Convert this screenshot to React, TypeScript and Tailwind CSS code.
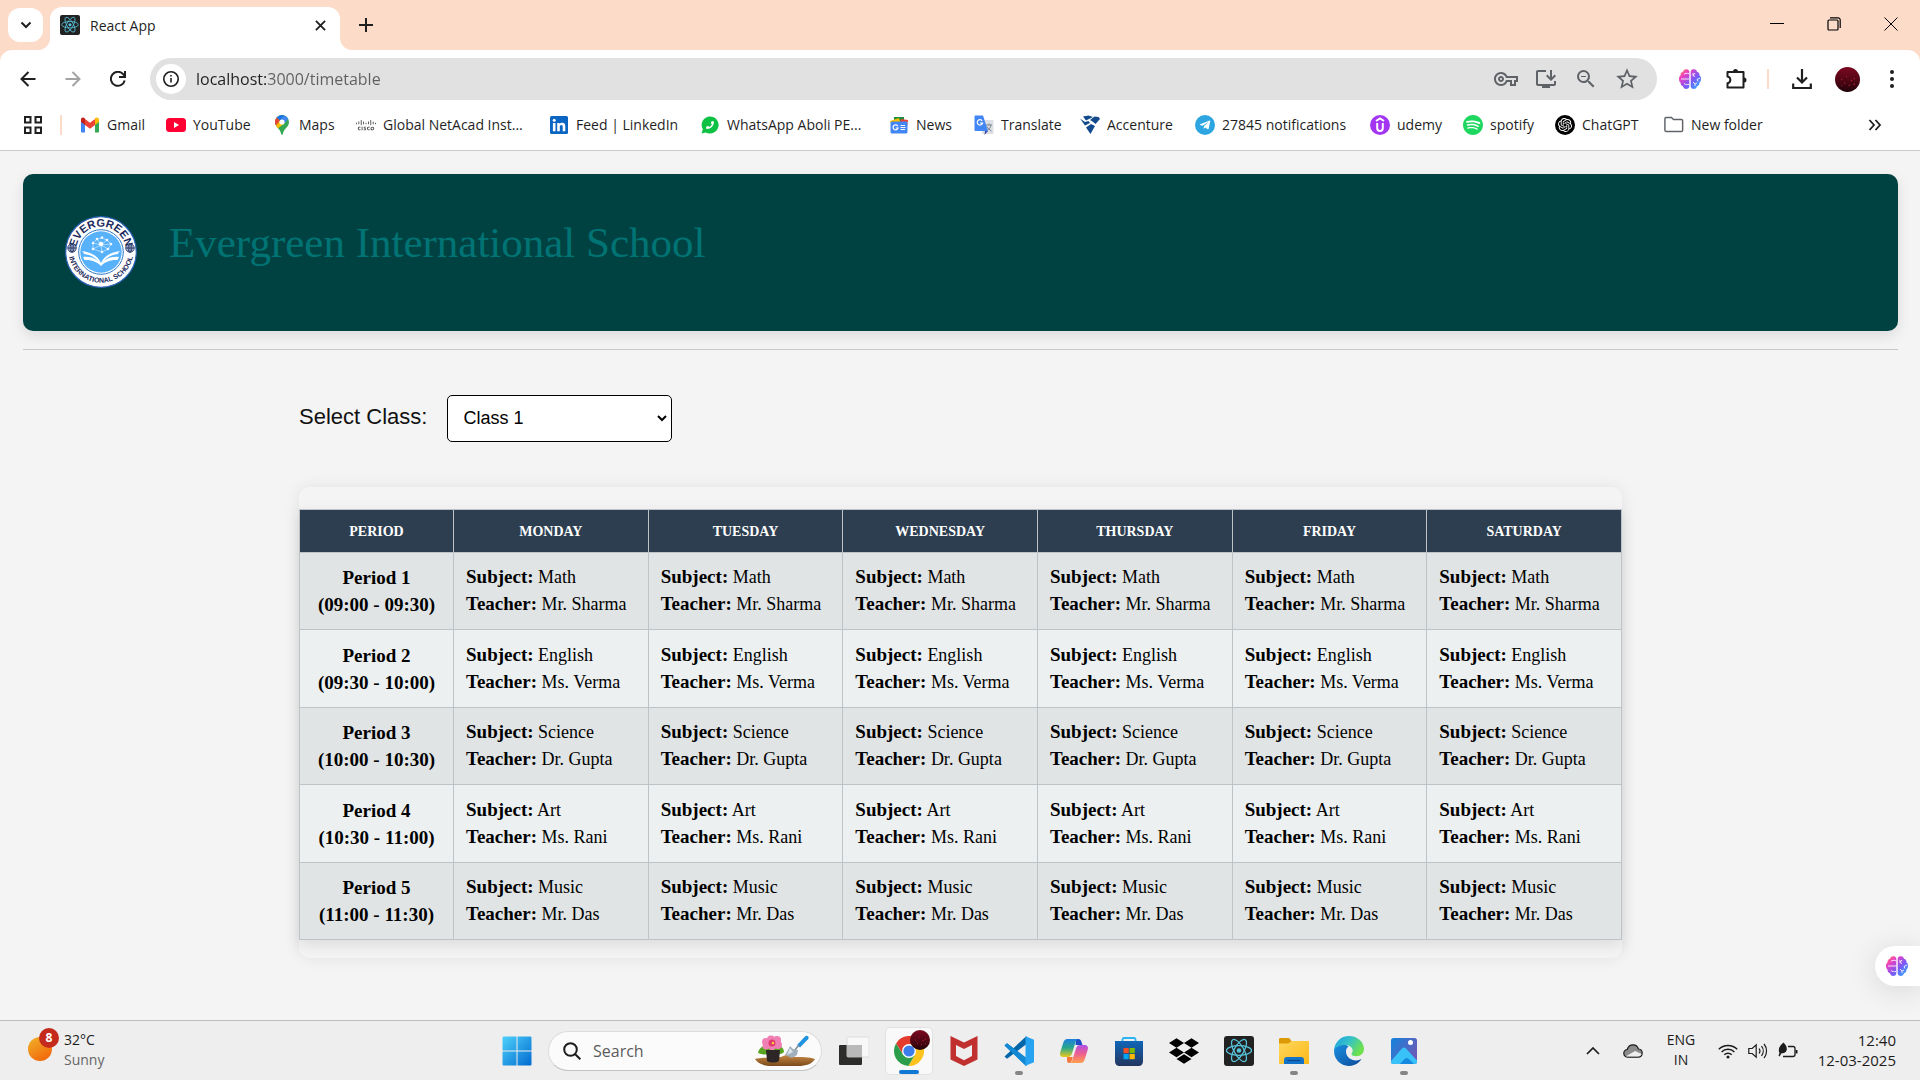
import React from "react";
import { MdInstallDesktop, MdOutlineVpnKey, MdStarOutline, MdZoomOut } from "react-icons/md";
import { SiCisco, SiDropbox, SiOpenai, SiSpotify } from "react-icons/si";
import { FaPhoneAlt, FaTelegramPlane } from "react-icons/fa";

const days = ["Monday", "Tuesday", "Wednesday", "Thursday", "Friday", "Saturday"];

const periods = [
  { name: "Period 1", time: "(09:00 - 09:30)", subject: "Math", teacher: "Mr. Sharma" },
  { name: "Period 2", time: "(09:30 - 10:00)", subject: "English", teacher: "Ms. Verma" },
  { name: "Period 3", time: "(10:00 - 10:30)", subject: "Science", teacher: "Dr. Gupta" },
  { name: "Period 4", time: "(10:30 - 11:00)", subject: "Art", teacher: "Ms. Rani" },
  { name: "Period 5", time: "(11:00 - 11:30)", subject: "Music", teacher: "Mr. Das" },
];

/* ---------- Icons ---------- */

function ReactTile({ size }: { size: string }) {
  return (
    <svg viewBox="0 0 30 30" className={size} aria-hidden="true">
      <rect width="30" height="30" rx="3" fill="#222" />
      <g fill="none" stroke="#58c4dc" strokeWidth="1.2">
        <ellipse cx="15" cy="14.5" rx="12.5" ry="4.8" />
        <ellipse cx="15" cy="14.5" rx="12.5" ry="4.8" transform="rotate(60 15 14.5)" />
        <ellipse cx="15" cy="14.5" rx="12.5" ry="4.8" transform="rotate(120 15 14.5)" />
      </g>
      <circle cx="15" cy="14.5" r="2.3" fill="#58c4dc" />
    </svg>
  );
}

function Brain({ id }: { id: string }) {
  return (
    <svg viewBox="0 0 22 20" className="h-5 w-[22px]" aria-hidden="true">
      <defs>
        <linearGradient id={id} x1="0" y1="0" x2="1" y2="1">
          <stop offset="0" stopColor="#ff9a3c" />
          <stop offset="0.25" stopColor="#ee3fc0" />
          <stop offset="0.6" stopColor="#7a5af8" />
          <stop offset="1" stopColor="#22b8ff" />
        </linearGradient>
      </defs>
      <path
        fill={`url(#${id})`}
        d="M10.3 2.2C9.8.6 8.300 0 7 .2 5.200.3 4.200 1.500 4 2.800 2.300 3.200 1.300 4.600 1.600 6.200.3 7.200 0 8.600 0 10s.4 2.900 1.600 3.800c-.2 1.700.8 3 2.400 3.400.3 1.600 1.500 2.800 3.200 2.800 1.500 0 2.700-.7 3.100-2.200zM11.700 2.200C12.200.6 13.700 0 15 .2c1.800.1 2.800 1.300 3 2.600 1.700.4 2.700 1.800 2.400 3.400C21.700 7.200 22 8.600 22 10s-.4 2.900-1.600 3.800c.2 1.700-.8 3-2.400 3.400-.3 1.600-1.500 2.800-3.200 2.800-1.500 0-2.700-.7-3.100-2.200z"
      />
      <g fill="none" stroke="#fff" strokeWidth="1" opacity=".85">
        <path d="M2 10h8.300M5 5.500c1-1.500 3-1.200 5-1M5 14.500c1.500 1.500 3 1 5 1M14 4v2.500l2 1M16 4l-2 2.500M21 9l-3 1.500 1 2M14 13l2 2v2M18 14l-2 1" />
      </g>
    </svg>
  );
}

function ChromeLogo() {
  return (
    <svg viewBox="0 0 30 30" className="h-[30px] w-[30px]" aria-hidden="true">
      <circle cx="15" cy="15" r="15" fill="#fff" />
      <path d="M15 8h13.300A15 15 0 0 0 2 7.500L9 18.500z" fill="#e33b2e" />
      <path d="M21.060 18.500 14.400 30A15 15 0 0 0 28.300 8H15z" fill="#fcc31e" />
      <path d="M8.940 18.500 2.010 7.500A15 15 0 0 0 14.400 30L21.060 18.500z" fill="#2c9e4b" />
      <circle cx="15" cy="15" r="7" fill="#fff" />
      <circle cx="15" cy="15" r="5.600" fill="#3b7ded" />
    </svg>
  );
}

function RubyAvatar({ size, id }: { size: string; id: string }) {
  return (
    <svg viewBox="0 0 26 26" className={size} aria-hidden="true">
      <defs>
        <linearGradient id={id} x1="0" y1="0" x2="0" y2="1">
          <stop offset="0" stopColor="#7d0820" />
          <stop offset="0.6" stopColor="#4a0613" />
          <stop offset="1" stopColor="#1e0308" />
        </linearGradient>
      </defs>
      <circle cx="13" cy="13" r="13" fill={`url(#${id})`} />
      <g fill="#a8182f">
        <circle cx="7" cy="13" r=".8" />
        <circle cx="12" cy="10" r=".7" />
        <circle cx="17" cy="14" r=".9" />
        <circle cx="10" cy="17" r=".8" />
        <circle cx="20" cy="12" r=".9" />
        <circle cx="15" cy="19" r=".8" />
        <circle cx="20" cy="18" r=".9" />
        <circle cx="7" cy="19" r=".6" />
      </g>
    </svg>
  );
}

const GmailIcon = (
  <svg viewBox="0 0 20 16" className="h-4 w-5">
    <path d="M1 3v11.500c0 .6.400 1 1 1h3V7z" fill="#4285f4" />
    <path d="M19 3v11.500c0 .6-.4 1-1 1h-3V7z" fill="#34a853" />
    <path d="M15 2v6l4-3V2.500C19 .5 16.800-.2 15 1.100z" fill="#fbbc04" />
    <path d="M5 8V2l5 3.800L15 2v6l-5 3.800z" fill="#ea4335" />
    <path d="M1 2.500V5l4 3V1.500C3.200-.2 1 .5 1 2.500z" fill="#c5221f" />
  </svg>
);

const YoutubeIcon = (
  <svg viewBox="0 0 20 14" className="h-3.5 w-5">
    <rect width="20" height="14" rx="3.500" fill="#ff0033" />
    <path d="M8 4v6l5-3z" fill="#fff" />
  </svg>
);

const MapsIcon = (
  <svg viewBox="0 0 16 20" className="h-5 w-4">
    <path d="M8 0a7 7 0 0 0-7 7c0 5 5 6 6.200 12 .2 1.300 1.400 1.300 1.600 0C10 13 15 12 15 7a7 7 0 0 0-7-7z" fill="#34a853" />
    <path d="M8 0a7 7 0 0 0-5.400 2.500L5.900 5.300 10.200.4A7 7 0 0 0 8 0z" fill="#1a73e8" />
    <path d="M2.600 2.500A7 7 0 0 0 1 7c0 1.500.4 2.600 1 3.600l4-4.900z" fill="#ea4335" />
    <path d="M10.200.4 5.900 5.300l4.300 3.400 3.900-4.800A7 7 0 0 0 10.200.4z" fill="#4285f4" />
    <path d="M10.200 8.700 3.900 13.300 2 10.600l4-4.900z" fill="#fbbc04" />
    <circle cx="8" cy="7" r="2.600" fill="#fff" />
  </svg>
);

const LinkedinIcon = (
  <svg viewBox="0 0 18 18" className="h-[18px] w-[18px]">
    <rect width="18" height="18" rx="1.500" fill="#0a66c2" />
    <g fill="#fff">
      <circle cx="4.200" cy="4.200" r="1.500" />
      <path d="M2.900 7h2.600v8.300H2.900zM7.200 7h2.400v1.200c.5-.9 1.500-1.400 2.600-1.400 2.500 0 3.100 1.600 3.100 3.900v4.600h-2.600v-4.100c0-1.200-.1-2.200-1.300-2.200-1.300 0-1.600 1-1.600 2.200v4.100H7.200z" />
    </g>
  </svg>
);

const NewsIcon = (
  <svg viewBox="0 0 20 18" className="h-[18px] w-5">
    <path d="M5 1h10v6H5z" fill="#1e8e3e" />
    <path d="m1 5 9-3 2 7-9 2z" fill="#fbbc04" />
    <path d="m19 4-7-1-2 7 8 1z" fill="#ea4335" />
    <rect x="1.500" y="5.500" width="17" height="12" rx="1.500" fill="#4285f4" />
    <path d="M8.800 10.200A2.500 2.500 0 1 0 9 12H6.800M11.500 9.500h4.500M11.500 11.500h5M11.500 13.500h4.500" fill="none" stroke="#fff" strokeWidth="1.200" />
  </svg>
);

const TranslateIcon = (
  <svg viewBox="0 0 20 20" className="h-5 w-5">
    <rect x="8" y="5" width="11.500" height="14" rx="1" fill="#dcdfe3" />
    <path d="M12 10h6M15 8.500V10M17 10c-.5 2.500-2 4.500-4 5.500M13 11.500c1 2 2.500 3.500 4.500 4.500" fill="none" stroke="#77838f" />
    <path d="M11 16h3l-3.500 4z" fill="#3949ab" />
    <path d="M1.500.5H9L14 16H1.500C.9 16 .5 15.600.5 15V1.500c0-.6.4-1 1-1z" fill="#4285f4" />
    <path d="M8.200 5.800A2.700 2.700 0 1 0 8.600 8H6" fill="none" stroke="#fff" strokeWidth="1.200" />
  </svg>
);

const AccentureIcon = (
  <svg viewBox="0 0 20 20" className="h-5 w-5" fill="#124a8c">
    <path d="M3 1.500 8.500.5 13 2 6 5.500zM14.500 1.500l4 .5L20 4l-4.500 5-3-2.500L10 5zM0 3.500 5 7l3.500-1L10 8l-5 2.500zM11 9l4 2-4.500 8L6 12.500z" />
  </svg>
);

const UdemyIcon = (
  <svg viewBox="0 0 20 20" className="h-5 w-5">
    <circle cx="10" cy="10" r="10" fill="#a435f0" />
    <path d="m6 6 4-2.600L14 6M7.200 8v5c0 1.800 1 3 2.800 3s2.800-1.200 2.800-3V8" fill="none" stroke="#fff" strokeWidth="2" />
  </svg>
);

const FolderIcon = (
  <svg viewBox="0 0 22 18" className="h-[17px] w-[21px]">
    <path d="M2.500 1.200h5.700l2.300 2.300h8.500c.9 0 1.500.6 1.500 1.500v10.300c0 .9-.6 1.500-1.500 1.500H2.500c-.9 0-1.500-.6-1.500-1.500V2.700c0-.9.600-1.500 1.500-1.500z" fill="none" stroke="#5f6368" strokeWidth="1.600" />
  </svg>
);

const WhatsappIcon = (
  <span className="relative flex h-[18px] w-[18px] items-center justify-center">
    <svg viewBox="0 0 18 18" className="absolute h-[18px] w-[18px]" fill="#0cc143">
      <path d="M9 .5a8.500 8.500 0 1 1-4.100 15.900L.6 17.500l1.200-4.200A8.500 8.500 0 0 1 9 .5z" />
    </svg>
    <FaPhoneAlt className="relative h-2 w-2 -scale-x-100 text-white" />
  </span>
);

const bookmarks = [
  { label: "Gmail", width: "w-[86px]", icon: GmailIcon },
  { label: "YouTube", width: "w-[106px]", icon: YoutubeIcon },
  { label: "Maps", width: "w-[84px]", icon: MapsIcon },
  { label: "Global NetAcad Inst...", width: "w-[193px]", icon: <SiCisco className="h-5 w-5 text-[#444]" /> },
  { label: "Feed | LinkedIn", width: "w-[151px]", icon: LinkedinIcon },
  { label: "WhatsApp Aboli PE...", width: "w-[189px]", icon: WhatsappIcon },
  { label: "News", width: "w-[85px]", icon: NewsIcon },
  { label: "Translate", width: "w-[106px]", icon: TranslateIcon },
  { label: "Accenture", width: "w-[115px]", icon: AccentureIcon },
  {
    label: "27845 notifications",
    width: "w-[175px]",
    icon: (
      <span className="flex h-5 w-5 items-center justify-center rounded-full bg-[#2ca5e0]">
        <FaTelegramPlane className="h-3 w-3 text-white" />
      </span>
    ),
  },
  { label: "udemy", width: "w-[93px]", icon: UdemyIcon },
  { label: "spotify", width: "w-[92px]", icon: <SiSpotify className="h-5 w-5 text-[#1ed760]" /> },
  {
    label: "ChatGPT",
    width: "w-[109px]",
    icon: (
      <span className="flex h-5 w-5 items-center justify-center rounded-full bg-black">
        <SiOpenai className="h-3.5 w-3.5 text-white" />
      </span>
    ),
  },
  { label: "New folder", width: "w-[110px]", icon: FolderIcon },
];

/* ---------- Browser chrome ---------- */

function TabStrip() {
  return (
    <div className="flex h-[50px] items-start">
      <button aria-label="Search tabs" className="mt-2 ml-2 flex h-[34px] w-[35px] items-center justify-center rounded-[12px] bg-white">
        <svg viewBox="0 0 12 8" className="h-2 w-3" fill="none" stroke="#1f1f1f" strokeWidth="2">
          <path d="m1.500 1.500 4.500 4.500 4.500-4.500" />
        </svg>
      </button>
      <div className="relative mt-[7px] ml-[7px] flex h-[43px] w-[290px] items-center rounded-t-[12px] bg-white pr-2.5 pb-[7px] pl-2.5">
        <svg viewBox="0 0 12 12" className="absolute bottom-0 -left-3 h-3 w-3" fill="#fff">
          <path d="M12 0v12H0A12 12 0 0 0 12 0z" />
        </svg>
        <svg viewBox="0 0 12 12" className="absolute -right-3 bottom-0 h-3 w-3" fill="#fff">
          <path d="M0 0v12h12A12 12 0 0 1 0 0z" />
        </svg>
        <ReactTile size="h-5 w-5" />
        <span className="ml-2.5 flex-1 text-[14px] text-[#1f1f1f]">React App</span>
        <button aria-label="Close tab" className="flex h-5 w-5 items-center justify-center">
          <svg viewBox="0 0 12 12" className="h-[11px] w-[11px]" stroke="#1f1f1f" strokeWidth="2">
            <path d="m1 1 10 10M11 1 1 11" />
          </svg>
        </button>
      </div>
      <button aria-label="New tab" className="mt-[10px] ml-[11px] flex h-[30px] w-[30px] items-center justify-center">
        <svg viewBox="0 0 14 14" className="h-3.5 w-3.5" stroke="#1f1f1f" strokeWidth="2">
          <path d="M7 0v14M0 7h14" />
        </svg>
      </button>
      <div className="mr-px ml-auto flex h-12 text-black">
        <button aria-label="Minimize" className="flex w-[57px] items-center justify-center">
          <svg viewBox="0 0 14 14" className="h-3.5 w-3.5" stroke="currentColor" strokeWidth="1">
            <path d="M0 6.500h14" />
          </svg>
        </button>
        <button aria-label="Restore" className="flex w-[57px] items-center justify-center">
          <svg viewBox="0 0 14 14" className="h-3.5 w-3.5" fill="none" stroke="currentColor" strokeWidth="1.200">
            <rect x="1" y="3" width="10" height="10" rx="1" />
            <path d="M3 .8h8A2.200 2.200 0 0 1 13.200 3v8" />
          </svg>
        </button>
        <button aria-label="Close" className="flex w-[57px] items-center justify-center">
          <svg viewBox="0 0 14 14" className="h-3.5 w-3.5" stroke="currentColor" strokeWidth="1">
            <path d="m.5.5 13 13M13.500.5l-13 13" />
          </svg>
        </button>
      </div>
    </div>
  );
}

function Toolbar() {
  return (
    <div className="flex h-[58px] items-center pr-4 pl-3">
      <div className="flex w-[138px] items-center gap-[13px]">
        <button aria-label="Back" className="flex h-8 w-8 items-center justify-center">
          <svg viewBox="0 0 16 16" className="h-4 w-4" fill="none" stroke="#1f1f1f" strokeWidth="2">
            <path d="M15.500 8H2M8.500 1 1.500 8l7 7" />
          </svg>
        </button>
        <button aria-label="Forward" className="flex h-8 w-8 items-center justify-center">
          <svg viewBox="0 0 16 16" className="h-4 w-4" fill="none" stroke="#a3a3a3" strokeWidth="2">
            <path d="M.5 8H14M7.500 1l7 7-7 7" />
          </svg>
        </button>
        <button aria-label="Reload" className="flex h-8 w-8 items-center justify-center">
          <svg viewBox="0 0 16 16" className="h-4 w-4" fill="none" stroke="#1f1f1f" strokeWidth="2">
            <path d="M14.700 9.500A7 7 0 1 1 13.200 3.200L15 5M15 0v6H9" />
          </svg>
        </button>
      </div>
      <div className="flex h-[42px] flex-1 items-center rounded-full bg-[#e1e1e1] pr-[17px] pl-1.5">
        <button aria-label="View site information" className="flex h-[30px] w-[30px] items-center justify-center rounded-full bg-white">
          <svg viewBox="0 0 16 16" className="h-4 w-4" fill="none" stroke="#1f1f1f" strokeWidth="1.600">
            <circle cx="8" cy="8" r="7.200" />
            <path d="M8 7v4.500M8 4v1.600" />
          </svg>
        </button>
        <input
          aria-label="Address"
          defaultValue="localhost:3000/timetable"
          className="ml-2.5 flex-1 bg-linear-[to_right,#1f1f1f_70px,#5f5f5f_70px] bg-clip-text text-[16px] text-transparent outline-none"
        />
        <div className="flex items-center gap-4 text-[#5f6368]">
          <button aria-label="Passwords"><MdOutlineVpnKey className="h-6 w-6" /></button>
          <button aria-label="Install app"><MdInstallDesktop className="h-6 w-6" /></button>
          <button aria-label="Zoom"><MdZoomOut className="h-6 w-6" /></button>
          <button aria-label="Bookmark this page"><MdStarOutline className="h-[26px] w-[26px]" /></button>
        </div>
      </div>
      <div className="flex items-center">
        <button aria-label="Assistant extension" className="ml-[22px]"><Brain id="brainBar" /></button>
        <button aria-label="Extensions" className="ml-6">
          <svg viewBox="0 0 22 22" className="h-[22px] w-[22px]" fill="none" stroke="#1f1f1f" strokeWidth="2" strokeLinejoin="round">
            <path d="M2.500 4h16v15.500h-16v-4.300c3.800-.6 3.800-6.200 0-6.800z" />
            <path d="M8 3.500a2.500 2.500 0 0 1 5 0zM19 9.500a2.500 2.500 0 0 1 0 5z" fill="#1f1f1f" stroke="none" />
          </svg>
        </button>
        <span className="ml-5 h-5 w-0.5 bg-[#fddbc9]" />
        <button aria-label="Downloads" className="ml-[23px]">
          <svg viewBox="0 0 20 20" className="h-5 w-5" fill="none" stroke="#1f1f1f" strokeWidth="2.200">
            <path d="M10 0v13M5 8.500l5 5 5-5M1.200 14.500V19h17.600v-4.500" />
          </svg>
        </button>
        <button aria-label="Profile" className="ml-[23px]"><RubyAvatar size="h-[25px] w-[25px]" id="rubyBar" /></button>
        <button aria-label="Browser menu" className="ml-5 flex w-6 justify-center">
          <svg viewBox="0 0 6 20" className="h-5 w-1.5" fill="#1f1f1f">
            <circle cx="3" cy="3" r="2" />
            <circle cx="3" cy="10" r="2" />
            <circle cx="3" cy="17" r="2" />
          </svg>
        </button>
      </div>
    </div>
  );
}

function BookmarksBar() {
  return (
    <nav aria-label="Bookmarks" className="flex h-[43px] items-center border-b border-[#cacaca] pb-[9px] pl-6 text-[14px] text-[#1f1f1f]">
      <button aria-label="Apps" className="w-9">
        <svg viewBox="0 0 18 18" className="h-[18px] w-[18px]" fill="none" stroke="#1f1f1f" strokeWidth="2">
          <path d="M1 1h5.500v5.500H1zM11.500 1H17v5.500h-5.500zM1 11.500h5.500V17H1zM11.500 11.500H17V17h-5.500z" />
        </svg>
      </button>
      <span className="mr-[18px] h-5 w-0.5 bg-[#fddbc9]" />
      {bookmarks.map((b) => (
        <a key={b.label} href="#" className={`flex items-center gap-[7px] whitespace-nowrap ${b.width}`}>
          <span className="flex w-5 shrink-0 justify-center">{b.icon}</span>
          {b.label}
        </a>
      ))}
      <button aria-label="More bookmarks" className="mr-[38px] ml-auto">
        <svg viewBox="0 0 14 12" className="h-3 w-3.5" fill="none" stroke="#1f1f1f" strokeWidth="1.800">
          <path d="m1.500 1 4.500 5-4.500 5M7.500 1 12 6l-4.500 5" />
        </svg>
      </button>
    </nav>
  );
}

/* ---------- Page ---------- */

function SchoolLogo() {
  return (
    <svg viewBox="0 0 72 72" className="h-[72px] w-[72px]" role="img" aria-label="Evergreen International School crest">
      <defs>
        <path id="crestTop" d="M10.800 36a25.200 25.200 0 0 1 50.400 0" />
        <path id="crestBottom" d="M3.300 34a32.700 32.700 0 0 0 65.400 0" />
      </defs>
      <circle cx="36" cy="36" r="35.300" fill="#fff" stroke="#2b62b4" strokeWidth="1.200" />
      <circle cx="36" cy="36" r="22.300" fill="#fff" stroke="#2f76c4" strokeWidth="1" />
      <circle cx="36" cy="36" r="20.700" fill="#57b2fb" />
      <g fill="#1c2b5e" fontFamily="'Liberation Sans', sans-serif" fontWeight="700">
        <text fontSize="11" textAnchor="middle">
          <textPath href="#crestTop" startOffset="50%">EVERGREEN</textPath>
        </text>
        <text fontSize="7" textAnchor="middle">
          <textPath href="#crestBottom" startOffset="50%">INTERNATIONAL SCHOOL</textPath>
        </text>
      </g>
      <g fill="#c9d4e6" stroke="#1c2b5e" strokeWidth=".9">
        <circle cx="7" cy="32" r="4.200" />
        <circle cx="65" cy="32" r="4.200" />
        <path d="M2.800 32h8.400M7 27.800v8.400M60.800 32h8.400M65 27.800v8.400" />
        <ellipse cx="7" cy="32" rx="2" ry="4.200" fill="none" />
        <ellipse cx="65" cy="32" rx="2" ry="4.200" fill="none" />
      </g>
      <g stroke="#fff" strokeWidth=".5" fill="#fff">
        <path fill="none" d="M28 27l4-4 5-1 5 2 4 4-3 5-7-4-8 4zM32 23l4 6 6-5M36 29l1 7M28 33l9 3 6-3M28 27l8 2 10-1" />
        <circle cx="36" cy="28" r="2" />
        <circle cx="28" cy="27" r="1" />
        <circle cx="32" cy="23" r="1" />
        <circle cx="37" cy="21.500" r="1" />
        <circle cx="42" cy="24" r="1" />
        <circle cx="46" cy="28" r="1" />
        <circle cx="43" cy="33" r="1" />
        <circle cx="37" cy="36" r="1" />
        <circle cx="28" cy="33" r="1" />
      </g>
      <path fill="#fff" d="M17 35c9 1 16 5 19 12 3-7 10-11 19-12-1 1-2 2-2 3-8 1-14 5-17 11-3-6-9-10-17-11 0-1-1-2-2-3zM18 41c8-1 15 2 18 8 3-6 10-9 18-8l-1.500 3c-7-.5-13 2-16.500 6-3.500-4-9.500-6.500-16.500-6z" />
    </svg>
  );
}

function Timetable() {
  return (
    <div className="mt-[45px] rounded-[10px] pt-[22px] pb-[18px] shadow-[0_0_16px_rgba(0,0,0,0.08)]">
      <table className="w-full table-fixed border-collapse text-[18px] leading-[27px] text-black shadow-[0_5px_14px_rgba(0,0,0,0.1)]">
        <colgroup>
          <col className="w-[154px]" />
        </colgroup>
        <thead>
          <tr className="h-[43px] bg-[#2d3e50] text-[14px] text-white uppercase">
            <th scope="col" className="border border-[#bdc3c7] font-bold">Period</th>
            {days.map((d) => (
              <th key={d} scope="col" className="border border-[#bdc3c7] font-bold">{d}</th>
            ))}
          </tr>
        </thead>
        <tbody>
          {periods.map((p) => (
            <tr key={p.name} className="odd:h-[77px] odd:bg-[#e0e4e5] even:h-[78px] even:bg-[#ecf0f1]">
              <th scope="row" className="border border-[#bdc3c7] text-center text-[19px] font-bold">
                {p.name}
                <br />
                {p.time}
              </th>
              {days.map((d) => (
                <td key={d} className="border border-[#bdc3c7] pl-3 whitespace-nowrap">
                  <strong className="text-[19px] leading-none">Subject:</strong> {p.subject}
                  <br />
                  <strong className="text-[19px] leading-none">Teacher:</strong> {p.teacher}
                </td>
              ))}
            </tr>
          ))}
        </tbody>
      </table>
    </div>
  );
}

function Page() {
  return (
    <main className="relative flex-1 bg-[#f4f4f4] pt-[23px] pr-[22px] pl-[23px] font-['Liberation_Serif',serif]">
      <header className="flex h-[157px] items-start gap-8 rounded-[10px] bg-[#004242] px-[42px] pt-[42px] shadow-[0_5px_14px_rgba(0,0,0,0.1)]">
        <SchoolLogo />
        <h1 className="text-[43px] leading-[54px] text-[#007474]">Evergreen International School</h1>
      </header>
      <hr className="mt-[18px] border-[#c8c8c8]" />
      <section className="mx-auto mt-[45px] max-w-[1323px]">
        <div className="flex items-center gap-5 font-['Liberation_Sans',sans-serif]">
          <label htmlFor="class-select" className="pb-1 text-[22px] text-[#111]">Select Class:</label>
          <div className="relative">
            <select id="class-select" className="h-[47px] w-[225px] appearance-none rounded-[5px] border border-black bg-white pl-[15px] text-[18px] text-black">
              <option>Class 1</option>
            </select>
            <svg viewBox="0 0 10 7" className="pointer-events-none absolute top-5 right-[5px] h-[7px] w-2.5" fill="none" stroke="#000" strokeWidth="2">
              <path d="m1 1 4 4 4-4" />
            </svg>
          </div>
        </div>
        <Timetable />
      </section>
      <button aria-label="Open assistant" className="absolute right-0 bottom-[34px] flex h-10 w-[45px] items-center rounded-l-full bg-white pl-[11px] shadow-[0_4px_30px_rgba(0,0,0,0.12)]">
        <Brain id="brainFloat" />
      </button>
    </main>
  );
}

/* ---------- Taskbar ---------- */

const taskIcon = "h-[30px] w-[30px]";

const PlantArt = (
  <svg viewBox="0 0 60 32" className="h-8 w-[60px]" aria-hidden="true">
    <defs>
      <linearGradient id="soil" x1="0" y1="0" x2="0" y2="1">
        <stop offset="0" stopColor="#c98b45" />
        <stop offset="1" stopColor="#7b4a1b" />
      </linearGradient>
    </defs>
    <path d="M0 24c6-2 16-1 26-2 6-3 10-3 14 0 8 0 14 0 20 2-3 5-9 7-17 7H18C9 31 3 29 0 24z" fill="url(#soil)" />
    <path d="M3 18c1-6 6-8 12-8l2 7c-4 3-9 3-14 1zM29 17c0-5-5-7-9-6l-2 6c3 3 8 3 11 0z" fill="#57a51f" />
    <path d="M11 15h14l-1 11c-3 2-9 2-12 0z" fill="#2d2626" />
    <g fill="#f07fb3">
      <circle cx="11" cy="7" r="4" />
      <circle cx="16" cy="4.500" r="4" />
      <circle cx="22" cy="5" r="4" />
      <circle cx="23" cy="10" r="4" />
      <circle cx="17" cy="11" r="4" />
      <circle cx="11" cy="11" r="3.500" />
    </g>
    <circle cx="17" cy="8" r="3.500" fill="#e03d6d" />
    <circle cx="18" cy="8" r="1.300" fill="#ffc83d" />
    <path d="m42 10 8-8.500c2-2 5 .5 3 2.800L45 12.500z" fill="#1f93e0" />
    <path d="m44 10-5 6" stroke="#7d8c98" strokeWidth="1.500" />
    <path d="m35 11 3 3 5 1-1 5-5 3-7-3 3-5z" fill="#9fb0bc" />
    <path d="m35 13 3 4-6 3z" fill="#dce4ea" />
  </svg>
);

type Task = { name: string; icon: React.ReactNode; state?: "active" | "open" };

const tasks: Task[] = [
  {
    name: "Task view",
    icon: (
      <svg viewBox="0 0 30 30" className={taskIcon}>
        <rect x="0" y="9" width="23" height="20" rx="1" fill="#2c2c2a" />
        <rect x="8" y="1" width="22" height="20" rx="1" fill="#f8f8f8" stroke="#d5d5d5" strokeWidth=".8" />
        <rect x="8" y="9" width="15" height="12" fill="#b9b9b9" />
      </svg>
    ),
  },
  {
    name: "Chrome",
    state: "active",
    icon: (
      <span className="relative">
        <ChromeLogo />
        <span className="absolute -top-[6px] -right-[6px]"><RubyAvatar size="h-5 w-5" id="rubyTask" /></span>
      </span>
    ),
  },
  {
    name: "McAfee",
    icon: (
      <svg viewBox="0 0 30 30" className={taskIcon}>
        <path fill="#c0302f" d="M1.500 0 15 6.500 28.500 0v23.500L15 30 1.500 23.500zM7 9v11l8 4.200 8-4.200V9l-8 4z" />
      </svg>
    ),
  },
  {
    name: "Visual Studio Code",
    state: "open",
    icon: (
      <svg viewBox="0 0 30 30" className={taskIcon}>
        <path d="M.5 9.500 3 7.300 22.500 22v8z" fill="#0a7bc8" />
        <path d="M.5 20.500 3 22.700 22.500 8V0z" fill="#0065a9" />
        <path d="M.5 9.500 3 7.300l19.500 15.200L22 30z" fill="#1389d4" />
        <path d="M21.500.3 30 3.800v22.400l-8.500 3.500z" fill="#27a3f2" />
      </svg>
    ),
  },
  {
    name: "Copilot",
    icon: (
      <svg viewBox="0 0 30 30" className={taskIcon}>
        <defs>
          <linearGradient id="copA" x1="0" y1="0" x2="0" y2="1">
            <stop offset="0" stopColor="#1e7fe0" />
            <stop offset=".5" stopColor="#2aa889" />
            <stop offset="1" stopColor="#ecc81c" />
          </linearGradient>
          <linearGradient id="copB" x1="0" y1="0" x2="0" y2="1">
            <stop offset="0" stopColor="#b04fe6" />
            <stop offset=".5" stopColor="#f0608e" />
            <stop offset="1" stopColor="#ffa04d" />
          </linearGradient>
        </defs>
        <path d="M17 3h2.500c1.500 0 2.300 1 2.800 2.500L23.500 9h-7z" fill="#1c4fc4" />
        <path d="M8.500 3H20c-2 0-3 1.500-3.600 3.500L13 17.500C12.300 20 11 21 8.500 21H4.500C1 21 .5 18.500 1.500 15.500l2.500-8C4.800 4.500 6 3 8.500 3z" fill="url(#copA)" />
        <path d="M21.500 27H10c2 0 3-1.500 3.600-3.500L17 12.500C17.700 10 19 9 21.500 9h4c3.500 0 4 2.500 3 5.500l-2.500 8c-.8 3-2 4.500-4.500 4.500z" fill="url(#copB)" />
        <path d="M8 21h5.800l-.8 3c-.6 2-1.500 3-3 3-1 0-1.600-.8-2-2z" fill="#f4793b" />
      </svg>
    ),
  },
  {
    name: "Microsoft Store",
    icon: (
      <svg viewBox="0 0 30 30" className={taskIcon}>
        <defs>
          <linearGradient id="store" x1="0" y1="0" x2="0" y2="1">
            <stop offset="0" stopColor="#0f66b8" />
            <stop offset="1" stopColor="#24365f" />
          </linearGradient>
        </defs>
        <path d="M8.500 7V3.500c0-1 .6-1.500 1.500-1.500h10c.9 0 1.500.5 1.500 1.500V7" fill="none" stroke="#2bb5f5" strokeWidth="1.800" />
        <path d="M1 5h28v20c0 3-1.500 5-5 5H6c-3.500 0-5-2-5-5z" fill="url(#store)" />
        <path d="M9.500 12h5.200v5.200H9.500z" fill="#f25022" />
        <path d="M15.600 12h5.200v5.200h-5.200z" fill="#7fba00" />
        <path d="M9.500 18h5.200v5.200H9.500z" fill="#00a4ef" />
        <path d="M15.600 18h5.200v5.200h-5.200z" fill="#ffb900" />
      </svg>
    ),
  },
  { name: "Dropbox", icon: <SiDropbox className="h-[30px] w-[30px] text-black" /> },
  { name: "React", icon: <ReactTile size="h-[30px] w-[30px]" /> },
  {
    name: "File Explorer",
    state: "open",
    icon: (
      <svg viewBox="0 0 30 30" className={taskIcon}>
        <defs>
          <linearGradient id="folder" x1="0" y1="0" x2="1" y2="1">
            <stop offset="0" stopColor="#ffd75e" />
            <stop offset="1" stopColor="#fbb917" />
          </linearGradient>
        </defs>
        <path d="M0 3.500C0 2.500.6 2 1.500 2H9c1 0 1.500.3 2 1l1.500 2v4H0z" fill="#dc9a06" />
        <path d="M0 7.500h9.500L12.500 5H29c.6 0 1 .4 1 1v22H0z" fill="url(#folder)" />
        <path d="M5 28v-4c0-2 1-3 3-3h14c2 0 3 1 3 3v4z" fill="#1273c8" />
        <path d="M8.500 24.500h13" stroke="#0b4a91" strokeWidth="1.200" />
      </svg>
    ),
  },
  {
    name: "Edge",
    icon: (
      <svg viewBox="0 0 30 30" className={taskIcon}>
        <defs>
          <linearGradient id="edgeA" x1="0" y1="0" x2="1" y2=".5">
            <stop offset="0" stopColor="#1b9de2" />
            <stop offset=".5" stopColor="#35c1c9" />
            <stop offset="1" stopColor="#6ee24c" />
          </linearGradient>
          <linearGradient id="edgeB" x1="0" y1="0" x2="1" y2="1">
            <stop offset="0" stopColor="#1a8fe0" />
            <stop offset="1" stopColor="#0c4a9a" />
          </linearGradient>
        </defs>
        <path d="M0 15a15 15 0 0 0 20 14.100c3.500-1.100 6-3.500 7.600-6-2.500 1.400-5 1.700-7.600 1.200-5-1-8-4.500-8-9 0-2 1-3.800 2.500-4.800C10 6.500 1 8 0 15z" fill="url(#edgeB)" />
        <path d="M0 14.500A15 15 0 0 1 15 0c9 0 15 6.500 15 13 0 4.500-3.500 7.200-7.500 7.200-3 0-5-1-5-2s1.200-1.400 1.200-3.600c0-3-3.200-5.600-7.200-5.600-5.500 0-10 2-11.500 5.500z" fill="url(#edgeA)" />
      </svg>
    ),
  },
  {
    name: "Photos",
    state: "open",
    icon: (
      <svg viewBox="0 0 30 30" className={taskIcon}>
        <defs>
          <linearGradient id="photo" x1="0" y1="0" x2="1" y2=".6">
            <stop offset="0" stopColor="#1384dc" />
            <stop offset="1" stopColor="#6a5bb8" />
          </linearGradient>
        </defs>
        <rect x="2" y="2" width="26" height="26" rx="2.500" fill="url(#photo)" />
        <path d="M2 25 13 12.500c1.300-1.500 2.700-1.500 4 0L28 24.500V26c0 1.200-.8 2-2 2H4c-1.200 0-2-.8-2-2z" fill="#39c2f7" />
        <path d="m11 28 4-4.500c2-2 3.500-2 5.500 0l4.500 4.500z" fill="#1689e0" />
        <circle cx="21.500" cy="6.500" r="2.500" fill="#fff" />
      </svg>
    ),
  },
];

function TaskButton({ task }: { task: Task }) {
  const active = task.state === "active";
  return (
    <div className="flex w-[55px] justify-center">
      <button
        aria-label={task.name}
        className={`relative flex h-12 w-12 items-center justify-center rounded-[5px] ${active ? "border border-[#e2e2e2] bg-[#f9f9f9]" : ""}`}
      >
        {task.icon}
        {active && <span className="absolute bottom-0 h-1 w-5 rounded-full bg-[#0f78d4]" />}
        {task.state === "open" && <span className="absolute bottom-0 h-1 w-2 rounded-full bg-[#858585]" />}
      </button>
    </div>
  );
}

function Taskbar() {
  return (
    <footer className="grid h-[60px] grid-cols-[1fr_auto_1fr] items-center border-t border-[#bdbdbd] bg-[#eeeeee] text-[14px] leading-5 text-[#1c1c1c]">
      <button className="flex items-center gap-[5px] justify-self-start pb-0.5 pl-7 text-left">
        <span className="relative h-[42px] w-[31px]">
          <svg viewBox="0 0 31 42" className="h-[42px] w-[31px]" aria-hidden="true">
            <defs>
              <linearGradient id="sun" x1="0" y1="0" x2=".6" y2="1">
                <stop offset="0" stopColor="#f0b429" />
                <stop offset="1" stopColor="#f26a0c" />
              </linearGradient>
            </defs>
            <circle cx="12" cy="20" r="12" fill="url(#sun)" />
          </svg>
          <span className="absolute -top-[1px] right-0 flex h-5 w-5 items-center justify-center rounded-full bg-[#c42b1c] text-[12px] font-bold text-white">8</span>
        </span>
        <span>
          32°C
          <br />
          <span className="text-[#666]">Sunny</span>
        </span>
      </button>
      <div className="flex items-center">
        <button aria-label="Start" className="flex w-[55px] justify-center">
          <svg viewBox="0 0 30 30" className={taskIcon}>
            <defs>
              <linearGradient id="win" gradientUnits="userSpaceOnUse" x1="0" y1="0" x2="30" y2="30">
                <stop offset="0" stopColor="#4fd3fb" />
                <stop offset="1" stopColor="#0068cf" />
              </linearGradient>
            </defs>
            <path fill="url(#win)" d="M2 .5h12.500v14H.5V2C.5 1 1 .5 2 .5zM15.500.5H28c1 0 1.500.5 1.500 1.500v12.500h-14zM.5 15.500h14v14H2c-1 0-1.500-.5-1.500-1.500zM15.500 15.500h14V28c0 1-.5 1.500-1.500 1.500H15.500z" />
          </svg>
        </button>
        <div className="mx-1 flex h-10 w-[274px] items-center rounded-full border border-[#dcdcdc] border-b-[#c4c4c4] bg-[#fbfbfb] pr-1.5 pl-3.5">
          <svg viewBox="0 0 18 18" className="h-[18px] w-[18px] shrink-0" fill="none" stroke="#1c1c1c" strokeWidth="2">
            <circle cx="7.500" cy="7.500" r="6.300" />
            <path d="m12 12 5.300 5.300" />
          </svg>
          <input aria-label="Search" placeholder="Search" className="ml-3 min-w-0 flex-1 text-[16px] outline-none placeholder:text-[#5c5c5c]" />
          {PlantArt}
        </div>
        {tasks.map((t) => (
          <TaskButton key={t.name} task={t} />
        ))}
      </div>
      <div className="flex items-center justify-self-end pr-6">
        <button aria-label="Show hidden icons">
          <svg viewBox="0 0 14 8" className="h-2 w-3.5" fill="none" stroke="#1c1c1c" strokeWidth="1.700">
            <path d="m1 7 6-6 6 6" />
          </svg>
        </button>
        <svg viewBox="0 0 20 14" className="ml-[23px] h-3.5 w-5" aria-hidden="true">
          <path d="M5 13.200C2.500 13.200.8 11.600.8 9.400c0-2 1.500-3.600 3.400-3.900C5 2.500 7.300.8 10 .8s4.800 1.500 5.400 4.200c2.200.2 3.800 1.900 3.800 4.100 0 2.400-1.700 4.100-4.200 4.100z" fill="#8c8c8c" stroke="#1c1c1c" strokeWidth="1.200" />
          <path d="M3 12.300 12 7l6.500 3c-.3 1.500-1.600 2.500-3.500 2.500H5c-.8 0-1.500 0-2-.2z" fill="#eee" />
        </svg>
        <button className="ml-[23px] w-[30px] pb-0.5 text-center">
          ENG
          <br />
          IN
        </button>
        <button aria-label="Network, volume and battery" className="ml-[22px] flex items-center gap-2.5">
          <svg viewBox="0 0 20 16" className="h-4 w-5" fill="none" stroke="#1c1c1c" strokeWidth="1.500">
            <path d="M.8 6.200a13 13 0 0 1 18.400 0M3.600 9a9 9 0 0 1 12.800 0M6.300 11.700a5.200 5.200 0 0 1 7.400 0" />
            <circle cx="10" cy="14" r="1.500" fill="#1c1c1c" stroke="none" />
          </svg>
          <svg viewBox="0 0 20 16" className="h-4 w-5" fill="none" stroke="#1c1c1c" strokeWidth="1.200">
            <path d="M.8 5.500h3.400l4-3.700v12.400l-4-3.700H.8zM11 5.500c1.200 1.500 1.200 3.500 0 5M13.500 3.200c2.300 2.800 2.300 6.800 0 9.600M16 1c3.400 4 3.400 10 0 14" />
          </svg>
          <svg viewBox="0 0 20 18" className="h-[18px] w-5" fill="none" stroke="#1c1c1c" strokeWidth="1.300">
            <path d="M10 4.500h5c1.300 0 2 .7 2 2v6c0 1.300-.7 2-2 2H5" />
            <path d="M17.500 8h2v3.500h-2z" fill="#1c1c1c" stroke="none" />
            <path d="M5.500.5C8 3 9.500 5.500 8.500 8.500c-.6 2-2.500 3-5 2.700L1.500 14.500.5 13.800 1.500 11C-.5 7 2 3.500 5.500.5z" fill="#1c1c1c" stroke="none" />
          </svg>
        </button>
        <button className="ml-4 w-[82px] pb-0.5 text-right text-[15px] leading-5 whitespace-nowrap">
          12:40
          <br />
          12-03-2025
        </button>
      </div>
    </footer>
  );
}

export default function App() {
  return (
    <div className="flex min-h-screen flex-col bg-[#fddbc9] font-['Open_Sans','Noto_Sans',sans-serif]">
      <TabStrip />
      <div className="rounded-t-[12px] bg-white">
        <Toolbar />
        <BookmarksBar />
      </div>
      <Page />
      <Taskbar />
    </div>
  );
}
